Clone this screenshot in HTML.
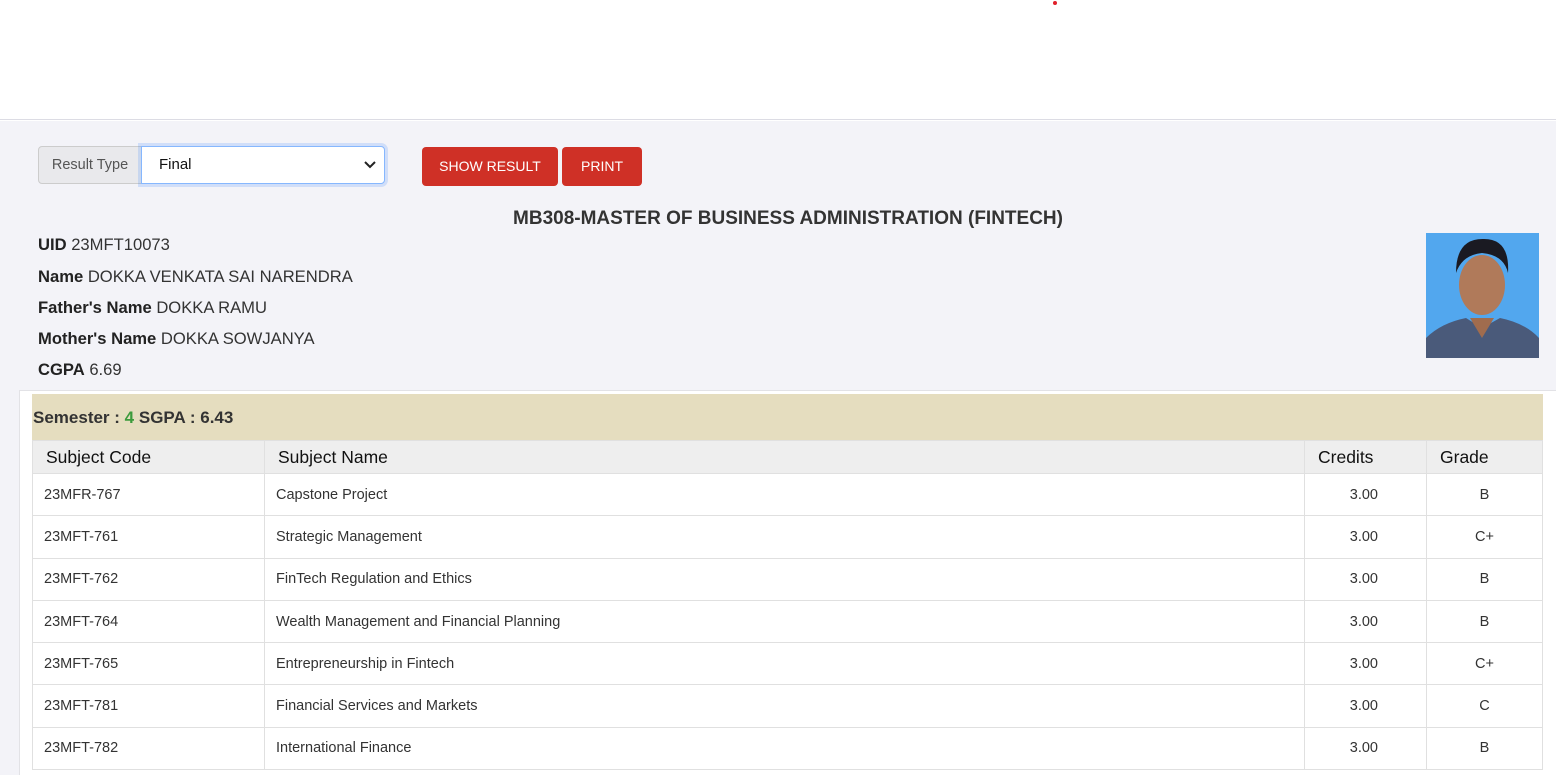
<!DOCTYPE html>
<html><head><style>
*{margin:0;padding:0;box-sizing:border-box}
body{width:1556px;height:775px;overflow:hidden;background:#fff;font-family:"Liberation Sans",Arial,sans-serif;color:#333;position:relative}
.top{position:absolute;left:0;top:0;width:1556px;height:120px;background:#fff;border-bottom:1px solid #dcdce4}
.dot{position:absolute;left:1053px;top:1px;width:4px;height:4px;border-radius:2px;background:#e0202a}
.main{position:absolute;left:0;top:121px;width:1556px;height:654px;background:#f3f3f8}
.lbl{position:absolute;left:38px;top:146px;width:104px;height:38px;background:#e9e9ec;border:1px solid #ccc;border-radius:4px 0 0 4px;font-size:14.5px;color:#555;line-height:36px;text-align:center}
.sel{position:absolute;left:141px;top:146px;width:244px;height:38px;background:#fff;border:1px solid #86b7fe;border-radius:0 4px 4px 0;box-shadow:0 0 0 3px rgba(13,110,253,.15);font-size:15px;color:#111;line-height:36px;padding-left:17px}
.sel svg{position:absolute;right:8px;top:14px}
.btn{position:absolute;top:147px;height:39px;background:#cf3026;color:#fff;font-size:14px;line-height:39px;text-align:center;border-radius:4px}
.title{position:absolute;left:0;width:1576px;top:208px;text-align:center;font-weight:bold;font-size:19px;color:#333}
.info{position:absolute;left:38px;font-size:16.6px;color:#333}
.info b{color:#222}
.photo{position:absolute;left:1426px;top:233px;width:113px;height:125px;background:#52a7ee;overflow:hidden}
.wrap{position:absolute;left:19px;top:390px;width:1537px;height:385px;background:#fff;border-top:1px solid #e2e2e6;border-left:1px solid #e2e2e6}
.sem{position:absolute;left:32px;top:394px;width:1511px;height:46px;background:#e5ddbf;font-size:17px;font-weight:bold;color:#333;padding:14px 0 0 1px}
table{position:absolute;left:32px;top:440px;width:1511px;border-collapse:collapse;font-size:14.5px}
td,th{border:1px solid #e0e0e0;padding:0 11px;color:#333;font-weight:normal}
th{background:#eee;height:33px;text-align:left;font-size:17.5px;color:#111;padding-left:13px;font-weight:500}
td{height:42.3px}
.r{text-align:right;padding-right:48px}.c{text-align:center}
</style></head><body>
<div class="top"></div><div class="dot"></div>
<div class="main"></div>
<div class="lbl">Result Type</div>
<div class="sel">Final<svg width="12" height="8" viewBox="0 0 12 8"><path d="M1 1l5 5 5-5" stroke="#222" stroke-width="2" fill="none"/></svg></div>
<div class="btn" style="left:422px;width:136px">SHOW RESULT</div>
<div class="btn" style="left:562px;width:80px">PRINT</div>
<div class="title">MB308-MASTER OF BUSINESS ADMINISTRATION (FINTECH)</div>
<div class="info" style="top:235px"><b>UID</b> 23MFT10073</div>
<div class="info" style="top:267px"><b>Name</b> DOKKA VENKATA SAI NARENDRA</div>
<div class="info" style="top:298px"><b>Father's Name</b> DOKKA RAMU</div>
<div class="info" style="top:329px"><b>Mother's Name</b> DOKKA SOWJANYA</div>
<div class="info" style="top:360px"><b>CGPA</b> 6.69</div>
<div class="photo"><svg width="113" height="125"><ellipse cx="56" cy="52" rx="23" ry="30" fill="#b07a5a"/><path d="M30 40q0-35 28-34q26 0 24 34q-4-18-26-20q-20 2-26 20z" fill="#1a1a22"/><path d="M0 105q15-15 40-20l16 10 18-10q25 5 39 20v20H0z" fill="#4a5a7a"/><path d="M44 85l12 20 12-20z" fill="#a06c4e"/></svg></div>
<div class="wrap"></div>
<div class="sem">Semester : <span style="color:#3c9b3c">4</span> SGPA : 6.43</div>
<table>
<tr><th style="width:232px">Subject Code</th><th>Subject Name</th><th style="width:122px">Credits</th><th style="width:116px">Grade</th></tr>
<tr><td>23MFR-767</td><td>Capstone Project</td><td class="r">3.00</td><td class="c">B</td></tr>
<tr><td>23MFT-761</td><td>Strategic Management</td><td class="r">3.00</td><td class="c">C+</td></tr>
<tr><td>23MFT-762</td><td>FinTech Regulation and Ethics</td><td class="r">3.00</td><td class="c">B</td></tr>
<tr><td>23MFT-764</td><td>Wealth Management and Financial Planning</td><td class="r">3.00</td><td class="c">B</td></tr>
<tr><td>23MFT-765</td><td>Entrepreneurship in Fintech</td><td class="r">3.00</td><td class="c">C+</td></tr>
<tr><td>23MFT-781</td><td>Financial Services and Markets</td><td class="r">3.00</td><td class="c">C</td></tr>
<tr><td>23MFT-782</td><td>International Finance</td><td class="r">3.00</td><td class="c">B</td></tr>
</table>
</body></html>
